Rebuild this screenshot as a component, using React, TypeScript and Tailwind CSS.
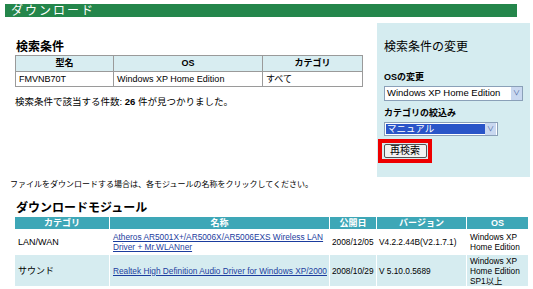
const font = { fontFamily: '"Liberation Sans", "Noto Sans CJK JP", sans-serif' }

const modules = [
  {
    category: 'LAN/WAN',
    name: 'Atheros AR5001X+/AR5006X/AR5006EXS Wireless LAN Driver + Mr.WLANner',
    date: '2008/12/05',
    version: 'V4.2.2.44B(V2.1.7.1)',
    os: ['Windows XP', 'Home Edition'],
    h: 'h-[24px]',
    bg: 'bg-white',
  },
  {
    category: 'サウンド',
    name: 'Realtek High Definition Audio Driver for Windows XP/2000',
    date: '2008/10/29',
    version: 'V 5.10.0.5689',
    os: ['Windows XP', 'Home Edition', 'SP1以上'],
    h: 'h-[31px]',
    bg: 'bg-[#d6ecf0]',
  },
]

export default function App() {
  return (
    <div style={font} className="w-[533px] h-[289px] bg-white overflow-hidden text-black">
      {/* title bar */}
      <div className="ml-[5px] mt-[4px] w-[512px] h-[13px] bg-[#24864b] flex items-center pl-[6px]">
        <span className="text-white text-[12px] leading-none tracking-[2px]">ダウンロード</span>
      </div>

      <div className="flex">
        {/* search conditions */}
        <div className="ml-[15px] w-[348px] pt-[23px]">
          <h2 className="text-[12px] font-bold leading-[15px] pl-[1px]">検索条件</h2>
          <table className="w-full border-collapse text-[9px] leading-none">
            <thead>
              <tr className="h-[16px] bg-[#d8edf1]">
                <th className="border border-[#9a9a9a] w-[98px] font-bold">型名</th>
                <th className="border border-[#9a9a9a] w-[149px] font-bold">OS</th>
                <th className="border border-[#9a9a9a] font-bold">カテゴリ</th>
              </tr>
            </thead>
            <tbody>
              <tr className="h-[15px]">
                <td className="border border-[#9a9a9a] pl-[3px]">FMVNB70T</td>
                <td className="border border-[#9a9a9a] pl-[3px]">Windows XP Home Edition</td>
                <td className="border border-[#9a9a9a] pl-[3px]">すべて</td>
              </tr>
            </tbody>
          </table>
          <p className="mt-[10px] text-[9.5px] leading-none">
            検索条件で該当する件数: <b>26</b> 件が見つかりました。
          </p>
        </div>

        {/* change conditions panel */}
        <div className="ml-[14px] mt-[6px] w-[153px] h-[154px] bg-[#d5ecf0] pl-[7px] pt-[17px]">
          <h3 className="text-[12px] leading-[14px]">検索条件の変更</h3>
          <div className="mt-[19px] text-[9px] font-bold leading-none">OSの変更</div>
          <div className="mt-[4px] w-[139px] h-[15px] bg-white border border-[#8aa0b8] flex items-center justify-between pl-[2px] text-[9.5px]">
            <span>Windows XP Home Edition</span>
            <span className="w-[11px] h-[13px] bg-[#c9d8f0] text-[#3b5a9a] text-[7px] flex items-center justify-center">∨</span>
          </div>
          <div className="mt-[8px] text-[9px] font-bold leading-none">カテゴリの絞込み</div>
          <div className="mt-[4px] w-[114px] h-[14px] bg-white border border-[#8aa0b8] flex items-center justify-between p-[1px] text-[9.5px]">
            <span className="flex-1 h-full bg-[#2a55c8] text-white flex items-center pl-[1px]">マニュアル</span>
            <span className="w-[11px] h-[12px] bg-[#c9d8f0] text-[#3b5a9a] text-[7px] flex items-center justify-center">∨</span>
          </div>
          <div className="mt-[3px] -ml-[6px] w-[54px] h-[24px] border-[4px] border-[#ee0000] flex items-center justify-center">
            <button className="w-[43px] h-[14px] bg-[#f2f2f2] border border-[#555] rounded-[2px] text-[10px] leading-none">
              再検索
            </button>
          </div>
        </div>
      </div>

      <p className="ml-[10px] mt-[3px] text-[8px] leading-[10px]">
        ファイルをダウンロードする場合は、各モジュールの名称をクリックしてください。
      </p>

      <h2 className="ml-[16px] mt-[11px] text-[12px] font-bold leading-[14px]">ダウンロードモジュール</h2>

      <table className="ml-[14px] w-[515px] border-separate border-spacing-[1px] mt-[1px] text-[8.3px] leading-[10px]">
        <thead>
          <tr className="h-[12px] bg-[#3ea7b7] text-white text-[9px]">
            <th className="w-[94px] font-bold">カテゴリ</th>
            <th className="w-[219px] font-bold">名称</th>
            <th className="w-[46px] font-bold">公開日</th>
            <th className="w-[89px] font-bold">バージョン</th>
            <th className="font-bold">OS</th>
          </tr>
        </thead>
        <tbody>
          {modules.map((m) => (
            <tr key={m.category} className={`${m.h} ${m.bg}`}>
              <td className="pl-[3px] text-[9px]">{m.category}</td>
              <td className="pl-[3px]">
                <a href="#" className="text-[#1b3d9e] underline">{m.name}</a>
              </td>
              <td className="pl-[2px] whitespace-nowrap">{m.date}</td>
              <td className="pl-[2px] whitespace-nowrap">{m.version}</td>
              <td className="pl-[3px]">
                {m.os.map((l) => (
                  <div key={l}>{l}</div>
                ))}
              </td>
            </tr>
          ))}
        </tbody>
      </table>
    </div>
  )
}
